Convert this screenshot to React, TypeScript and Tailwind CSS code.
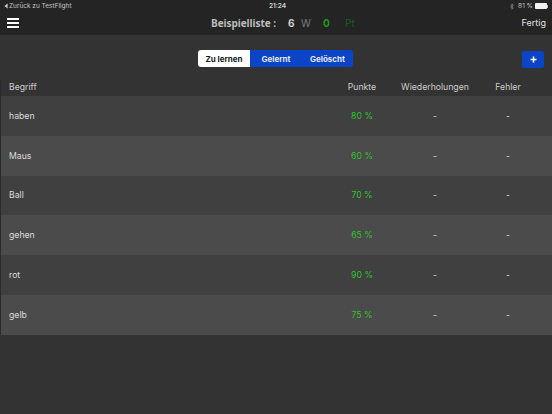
import React from "react";

const rows = [
  ["haben", "80 %"],
  ["Maus", "60 %"],
  ["Ball", "70 %"],
  ["gehen", "65 %"],
  ["rot", "90 %"],
  ["gelb", "75 %"],
];

function Cols({ a, b, c, d, green }: { a: string; b: string; c: string; d: string; green?: boolean }) {
  return (
    <>
      <div className="flex-1 pl-[8px]">{a}</div>
      <div className={"w-[60px] text-center " + (green ? "text-[#2cc427]" : "")}>{b}</div>
      <div className="w-[86px] text-center">{c}</div>
      <div className="w-[60px] text-center">{d}</div>
      <div className="w-[14px]" />
    </>
  );
}

export default function App() {
  return (
    <div className="w-[552px] h-[414px] bg-[#333333] text-[#dcdcdc] overflow-hidden flex flex-col font-['Inter','Liberation_Sans',sans-serif]">
      <header className="h-[35px] bg-[#242424] flex flex-col shrink-0">
        <div className="h-[12px] relative flex items-center justify-between pl-[4px] pr-[4px] text-[6.5px] leading-none text-[#c4c4c4]">
          <div className="flex items-center gap-[1px]">
            <svg width="4" height="6" viewBox="0 0 4 6"><path d="M3.6 0.4V5.6L0.4 3Z" fill="#c8c8c8" /></svg>
            <span>Zurück zu TestFlight</span>
          </div>
          <span className="absolute left-[269px] font-semibold text-[#d8d8d8]">21:24</span>
          <div className="flex items-center gap-[2px]">
            <svg width="4" height="7" viewBox="0 0 4 7" fill="none" stroke="#9a9a9a" strokeWidth="0.6"><path d="M0.3 1.8L3.3 4.9L2 6.3V0.7L3.3 2.1L0.3 5.2" /></svg>
            <span className="ml-[2px]">81 %</span>
            <div className="w-[12px] h-[6px] bg-[#f0f0f0] rounded-[1px]" />
            <div className="w-[1px] h-[3px] bg-[#bbbbbb] -ml-[2px]" />
          </div>
        </div>
        <div className="flex-1 relative flex items-center justify-between pl-[7px] pr-[6px]">
          <div className="flex flex-col gap-[2px] -mt-[1px]">
            <div className="w-[12px] h-[2px] bg-white" />
            <div className="w-[12px] h-[2px] bg-white" />
            <div className="w-[12px] h-[2px] bg-white" />
          </div>
          <div className="absolute left-[211px] top-0 bottom-0 flex items-center text-[10px] font-bold text-[#bdbdbd]">
            <span className="w-[77px] font-['Open_Sans'] tracking-[-0.05px]">Beispielliste :</span>
            <span className="w-[13px] text-[#cfcfcf]">6</span>
            <span className="w-[22px] font-normal text-[#7a7a7a]">W</span>
            <span className="w-[22px] text-[#1f9a1a]">0</span>
            <span className="font-normal text-[#1d5c1b]">Pt</span>
          </div>
          <span className="text-[9px] text-[#e0e0e0] -mt-[1px]">Fertig</span>
        </div>
      </header>
      <div className="h-[45px] shrink-0 relative flex items-center pt-[2px] pl-[198px]">
        <div className="flex h-[17px] text-[8px] font-bold leading-none rounded-[3px] overflow-hidden">
          <div className="w-[52px] bg-white text-[#1a1a1a] flex items-center justify-center">Zu lernen</div>
          <div className="w-[52px] bg-[#0b44c7] text-[#e4e8f4] flex items-center justify-center">Gelernt</div>
          <div className="w-[51px] bg-[#0b44c7] text-[#e4e8f4] flex items-center justify-center">Gelöscht</div>
        </div>
        <div className="absolute right-[8px] top-[16px] w-[22px] h-[17px] rounded-[2px] bg-[#0b44c7] flex items-center justify-center">
          <svg width="7" height="7" viewBox="0 0 7 7"><path d="M2.7 0.5h1.6v2.2h2.2v1.6H4.3v2.2H2.7V4.3H0.5V2.7h2.2z" fill="#ffffff" /></svg>
        </div>
      </div>
      <div className="h-[16px] shrink-0 flex items-center text-[8.7px] text-[#cccccc] border-l border-[#2b2b2b]">
        <Cols a="Begriff" b="Punkte" c="Wiederholungen" d="Fehler" />
      </div>
      <div className="flex flex-col text-[8.7px] border-l border-[#2b2b2b]">
        {rows.map((r, i) => (
          <div key={r[0]} className={"h-[39.8px] flex items-center pt-[1px] " + (i % 2 ? "bg-[#4b4b4b]" : "bg-[#404040]")}>
            <Cols a={r[0]} b={r[1]} c="-" d="-" green />
          </div>
        ))}
      </div>
    </div>
  );
}
